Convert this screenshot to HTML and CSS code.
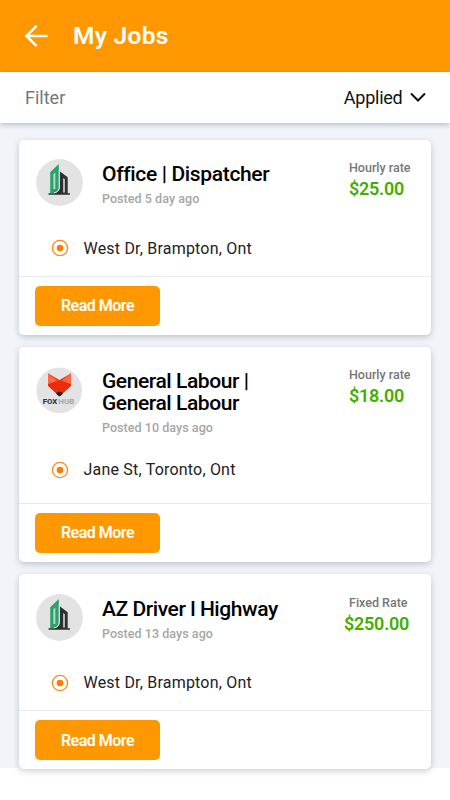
FILE: index.html
```html
<!DOCTYPE html>
<html lang="en">
<head>
<meta charset="utf-8">
<meta name="viewport" content="width=device-width, initial-scale=1">
<title>My Jobs</title>
<link rel="stylesheet" href="styles.css">
</head>
<body>
<svg class="defs" width="0" height="0" aria-hidden="true">
  <symbol id="towers" viewBox="0 0 47 47">
    <path d="M14.2 34V13.2l8.6-8.3V29c0 2.6-1.5 4.4-4.2 5z" fill="#29a36b"/>
    <path d="M17.4 30V15.4l1.9-1.9V30z" fill="#b9dccb"/>
    <path d="M12.5 34.2h5.2c3.6-.5 6-2.6 6-6.2V12.3l8 6v15.9h2.3v1.6H12.5z" fill="#2f3033"/>
    <path d="M27.2 33.5V19l1.6 1.2v13.3z" fill="#d8d8d8"/>
    <path d="M23.3 11v17c0 3.2-2 5.3-5.4 6" fill="none" stroke="#e3e3e3" stroke-width="1"/>
  </symbol>
</svg>
<header class="appbar">
  <svg class="back" viewBox="0 0 24 24" width="24" height="24"><path d="M23.5 12H2.5M12.6 1.8 2.4 12l10.2 10.2" fill="none" stroke="#fff" stroke-width="2.5"/></svg>
  <h1 class="title">My Jobs</h1>
</header>
<div class="filter">
  <span class="filter-label">Filter</span>
  <span class="filter-value">Applied</span>
  <svg class="chevron" viewBox="0 0 16 11" width="16" height="11"><path d="m1 1.5 7 7 7-7" fill="none" stroke="#111" stroke-width="2"/></svg>
</div>
<main class="jobs">
  <article class="card">
    <div class="top">
      <svg class="logo" viewBox="0 0 47 47"><circle cx="23.5" cy="23.5" r="23.4" fill="#e3e3e3"/><use href="#towers"/></svg>
      <div class="info">
        <h2 class="job dispatcher">Office | Dispatcher</h2>
        <p class="posted">Posted 5 day ago</p>
      </div>
      <div class="pay"><p class="kind">Hourly rate</p><p class="amount">$25.00</p></div>
    </div>
    <div class="place">
      <svg class="dot" viewBox="0 0 18 18"><circle cx="9" cy="9" r="7.6"/><circle class="core" cx="9" cy="9" r="3.3"/></svg>
      <span>West Dr, Brampton, Ont</span>
    </div>
    <div class="actions"><button class="more">Read More</button></div>
  </article>
  <article class="card tall">
    <div class="top">
      <svg class="logo" viewBox="0 0 47 47"><circle cx="23.2" cy="23.4" r="22.9" fill="#e3e3e3"/>
        <path d="m12 6.3 11.5 6.8L35 6.3v12.5L23.5 29.3 12 18.8z" fill="#e83a1b"/>
        <path d="m12 6.3 9.5 7.7L12 17.3zM35 6.3 25.5 14l9.5 3.3z" fill="#ff6746"/>
        <path d="m23.5 13.1 11.5 4.5v1.2L23.5 29.3 12 18.8v-1.2z" fill="#ed2b0c"/>
        <path d="m20.4 25.6 3.1-1 3.1 1-.4 2-2.7 2-2.7-2z" fill="#251d1d"/>
        <text x="6.8" y="37" class="fox" textLength="14.5" lengthAdjust="spacingAndGlyphs">FOX</text>
        <text x="22.3" y="37" class="hub" textLength="16.2" lengthAdjust="spacingAndGlyphs">HUB</text>
      </svg>
      <div class="info">
        <h2 class="job">General Labour |<br>General Labour</h2>
        <p class="posted">Posted 10 days ago</p>
      </div>
      <div class="pay"><p class="kind">Hourly rate</p><p class="amount">$18.00</p></div>
    </div>
    <div class="place">
      <svg class="dot" viewBox="0 0 18 18"><circle cx="9" cy="9" r="7.6"/><circle class="core" cx="9" cy="9" r="3.3"/></svg>
      <span>Jane St, Toronto, Ont</span>
    </div>
    <div class="actions"><button class="more">Read More</button></div>
  </article>
  <article class="card">
    <div class="top">
      <svg class="logo" viewBox="0 0 47 47"><circle cx="23.5" cy="23.5" r="23.4" fill="#e3e3e3"/><use href="#towers"/></svg>
      <div class="info">
        <h2 class="job">AZ Driver l Highway</h2>
        <p class="posted">Posted 13 days ago</p>
      </div>
      <div class="pay fixed"><p class="kind">Fixed Rate</p><p class="amount">$250.00</p></div>
    </div>
    <div class="place">
      <svg class="dot" viewBox="0 0 18 18"><circle cx="9" cy="9" r="7.6"/><circle class="core" cx="9" cy="9" r="3.3"/></svg>
      <span>West Dr, Brampton, Ont</span>
    </div>
    <div class="actions"><button class="more">Read More</button></div>
  </article>
</main>
</body>
</html>
```
FILE: styles.css
```css
* { box-sizing: border-box; margin: 0; padding: 0; }
html, body { height: 800px; overflow: hidden; }
body { background: #fff; font-family: Roboto, sans-serif; color: #000; }
.defs { display: block; }
.appbar { height: 72px; background: #ff9800; display: flex; align-items: center; padding-left: 24px; }
.back { flex: none; }
.title { margin-left: 25px; font-size: 24.5px; line-height: 28px; font-weight: 600; color: #fff; letter-spacing: .3px; }
.filter { position: relative; height: 51px; background: #fff; display: flex; align-items: center; padding: 0 24px 0 25px; box-shadow: 0 2px 5px rgba(50, 60, 70, .28); }
.filter-label { flex: 1; font-size: 18px; color: #777; }
.filter-value { font-size: 18px; color: #111; letter-spacing: -.25px; }
.chevron { margin-left: 7.5px; }
.jobs { height: 645px; background: #f1f5f9; padding: 16.5px 19px 0; display: flex; flex-direction: column; gap: 12.5px; }
.card { flex: none; height: 195px; background: #fff; border-radius: 5px; box-shadow: 0 2px 6px rgba(40, 50, 60, .25); display: flex; flex-direction: column; }
.tall { height: 214.5px; }
.top { height: 95px; display: flex; padding: 19.5px 0 0 17px; }
.tall .top { height: 109px; }
.logo { width: 47px; height: 47px; flex: none; }
.info { width: 266px; flex: none; padding-left: 19px; padding-top: 4px; white-space: nowrap; }
.tall .info { padding-top: 3.5px; }
.job { font-size: 21px; line-height: 22.4px; font-weight: 500; letter-spacing: -.43px; }
.dispatcher { letter-spacing: -.34px; }
.posted { font-size: 12.5px; line-height: 16px; margin-top: 6px; color: #a6a6a6; font-weight: 500; letter-spacing: .05px; }
.tall .posted { margin-top: 5.5px; }
.pay { white-space: nowrap; padding-top: 1px; }
.kind { font-size: 12.5px; line-height: 16px; color: #777; font-weight: 500; }
.tall .pay { padding-top: .5px; }
.amount { font-size: 18px; line-height: 21px; margin-top: 2px; color: #43ae00; font-weight: 600; letter-spacing: -.25px; }
.fixed .amount { margin-left: -5px; }
.place { display: flex; align-items: center; height: 27px; padding-left: 32px; font-size: 16px; color: #222; letter-spacing: .2px; }
.dot { width: 18px; height: 18px; margin-right: 14.5px; fill: none; stroke: #ff8a1c; stroke-width: 1.4; }
.core { fill: #ff7a00; stroke: none; }
.actions { margin-top: auto; height: 59px; border-top: 1px solid #e8eaeb; padding: 9px 0 0 16px; }
.more { display: block; width: 125px; height: 40px; border: 0; border-radius: 5px; background: #ff9800; color: #fff; font: 600 16px Roboto, sans-serif; letter-spacing: -.5px; }
.fox, .hub { font-family: Roboto, sans-serif; font-size: 7.5px; font-weight: 800; fill: #333; }
.hub { fill: #aaa; }
```
